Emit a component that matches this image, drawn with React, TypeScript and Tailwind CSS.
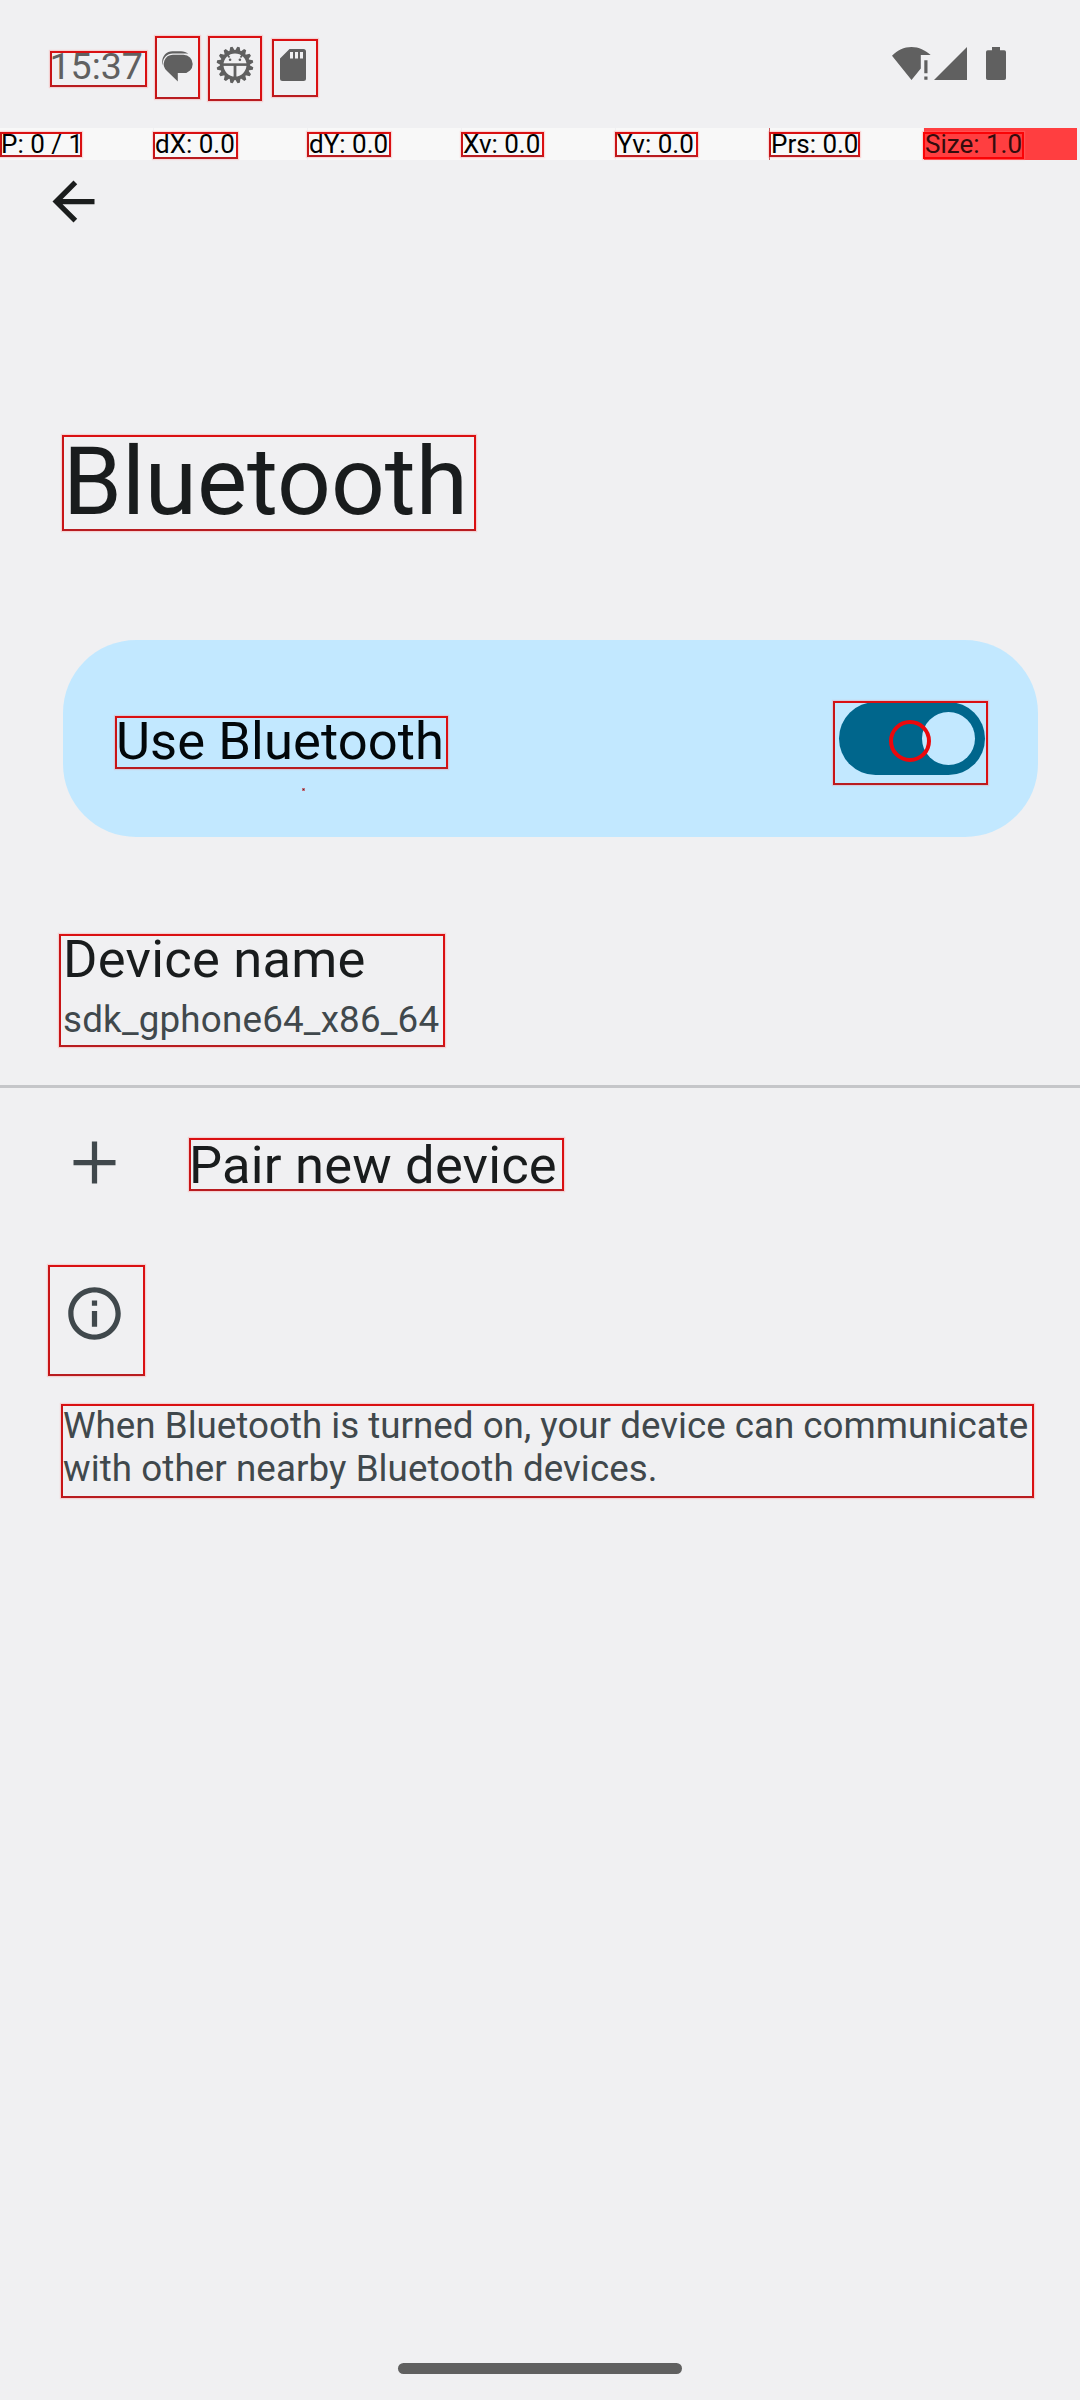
import type { ReactNode } from "react";

/** Thin red frame drawn around every detected element. */
function Marked({ className, children }: { className: string; children?: ReactNode }) {
  return (
    <div
      className={`box-border shrink-0 whitespace-nowrap border-2 border-t-[#da1012] border-r-[#da1012] border-b-[#b81c20] border-l-[#c81416] shadow-[0_0_1px_1px_rgba(255,130,130,0.28)] ${className}`}
    >
      {children}
    </div>
  );
}

const cells = [
  { text: "P: 0 / 1", box: "w-[82px] h-[25px] pl-0", cell: "bg-[#f8f8f8]", indent: "-ml-[1px]" },
  { text: "dX: 0.0", box: "w-[85px] h-[27px] -ml-px", cell: "bg-[#f8f8f8]", indent: "ml-0" },
  { text: "dY: 0.0", box: "w-[84px] h-[25px] -ml-px", cell: "bg-[#f8f8f8]", indent: "ml-0" },
  { text: "Xv: 0.0", box: "w-[83px] h-[25px] -ml-px", cell: "bg-[#f8f8f8]", indent: "ml-0" },
  { text: "Yv: 0.0", box: "w-[83px] h-[25px] -ml-px", cell: "bg-[#f8f8f8]", indent: "ml-0" },
  { text: "Prs: 0.0", box: "w-[91px] h-[25px] -ml-px", cell: "bg-[#f8f8f8] shadow-[-1px_0_0_#c85a5e]", indent: "ml-0" },
  { text: "Size: 1.0", box: "w-[101px] h-[27px] -ml-px border-[#fa0306]!", cell: "bg-[#ff3e40] text-[#330c0d]", indent: "ml-0" },
];

function ChatIcon() {
  return (
    <svg width="32" height="32" viewBox="0 0 32 32" className="mt-[13px] ml-[5px]" fill="#606060">
      <path d="M11 3.700h10.500a9.200 9.200 0 0 1 0 18.400h-5.700v8.400L5 19.900A9.200 9.200 0 0 1 11 3.700z" />
      <path d="M.6 14.200C-1.200 6.500 3.500 .2 10.500 .2h8.500c3 0 5.400 .9 7.300 2.600-1.300-.3-2.700-.4-4.300-.4H10.800C4.800 2.400 .8 7.500 .9 12z" />
    </svg>
  );
}

const teeth = Array.from({ length: 16 }, (_, i) => i * 22.5);

function GearIcon() {
  return (
    <svg width="38" height="38" viewBox="-19 -19 38 38" className="mt-[8px] ml-[6px]" fill="#606060">
      {teeth.map((a) => (
        <path key={a} d="M-3-13.500L-1.200-18.400h2.400L3-13.500z" transform={`rotate(${a + 11})`} />
      ))}
      <circle r="13.200" fill="none" stroke="#606060" strokeWidth="3.400" />
      <path d="M-13-1.700h26v2.600h-26z" />
      <path d="M-1.400-1h2.800v14h-2.800z" />
      <path d="M-8.500-11.500l3 4M8.500-11.500l-3 4" stroke="#606060" strokeWidth="1.800" />
      <circle cx="-4.900" cy="-5.200" r="1.300" />
      <circle cx="4.900" cy="-5.200" r="1.300" />
    </svg>
  );
}

function SdCardIcon() {
  return (
    <svg width="26" height="32" viewBox="0 0 26 32" className="mt-[8px] ml-[6px]">
      <path d="M9.500 0H23.500A2.500 2.500 0 0 1 26 2.500v27a2.500 2.500 0 0 1-2.500 2.500h-21A2.500 2.500 0 0 1 0 29.500V9.500z" fill="#606060" />
      <path d="M10 3h3v6.500h-3zM15 3h3v6.500h-3zM20 3h3v6.500h-3z" fill="#f0f0f2" />
    </svg>
  );
}

function StatusBar() {
  return (
    <div className="flex h-[128px] items-start pl-[50px]">
      <Marked className="mt-[51px] h-[36px] w-[97px] text-[37.5px] leading-[26px] text-[#606060]">
        <span className="-ml-[2.500px]">15:37</span>
      </Marked>
      <Marked className="mt-[36px] ml-[8px] h-[63px] w-[45px]">
        <ChatIcon />
      </Marked>
      <Marked className="mt-[36px] ml-[8px] h-[65px] w-[54px]">
        <GearIcon />
      </Marked>
      <Marked className="mt-[39px] ml-[10px] h-[58px] w-[46px]">
        <SdCardIcon />
      </Marked>
      <div className="mt-[47px] mr-[74px] ml-auto flex">
        <svg width="39" height="33" viewBox="0 0 39 33" fill="#606060">
          <path d="M19.500 33L0 8.700C5.500 3.300 12 0 19.500 0S33.200 3.300 38.700 8H28.800v13.400z" />
          <path d="M32.300 13.200h3.200v13h-3.200zM32.300 29.600h3.200v3.200h-3.200z" />
        </svg>
        <svg width="33" height="33" viewBox="0 0 33 33" className="ml-[3px]" fill="#606060">
          <path d="M33 0v33H0z" />
        </svg>
        <svg width="20" height="33" viewBox="0 0 20 33" className="ml-[19px]" fill="#606060">
          <path d="M6 0h8v3.300h4.200A1.800 1.800 0 0 1 20 5.100v26.100a1.800 1.800 0 0 1-1.800 1.800H1.800A1.800 1.800 0 0 1 0 31.200V5.100a1.800 1.800 0 0 1 1.800-1.800H6z" />
        </svg>
      </div>
    </div>
  );
}

function PointerBar() {
  return (
    <div className="flex h-[32px] gap-px text-[26px] leading-[20px] text-black">
      {cells.map((c) => (
        <div key={c.text} className={`w-[153px] pt-[4px] ${c.cell}`}>
          <Marked className={c.box}>
            <span className={c.indent}>{c.text}</span>
          </Marked>
        </div>
      ))}
    </div>
  );
}

export default function App() {
  return (
    <div className="flex h-[2400px] w-[1080px] flex-col overflow-hidden bg-[#f0f0f2] font-[Roboto,sans-serif] text-[#191c1d]">
      <StatusBar />
      <PointerBar />

      <div className="h-[275px] shrink-0 pt-[10px] pl-[42px]">
        <svg width="63" height="63" viewBox="0 0 24 24" fill="#1b1d1d">
          <path d="M20 11H7.830l5.590-5.590L12 4l-8 8 8 8 1.410-1.410L7.830 13H20v-2z" />
        </svg>
      </div>

      <Marked className="ml-[62px] h-[96px] w-[414px] text-[94.5px] leading-[90px]">
        <h1 className="-ml-px">Bluetooth</h1>
      </Marked>

      <div className="relative mt-[109px] ml-[63px] flex h-[197px] w-[975px] shrink-0 items-start rounded-[73px] bg-[#c2e8ff]">
        <Marked className="mt-[76px] ml-[52px] h-[53px] w-[333px] text-[52.5px] leading-[46px] tracking-[0.08px] text-[#02070a]">
          <span className="-ml-px">Use Bluetooth</span>
        </Marked>
        <span className="absolute top-[148px] left-[239px] size-[3px] border border-[#c0707c] bg-[#4a2f3c]" />
        <div className="relative mt-[61px] mr-[50px] ml-auto h-[84px] w-[155px]">
          <div className="mt-[1px] ml-[6px] flex h-[73px] w-[146px] items-center justify-end rounded-full bg-[#00668c] pr-[10px]">
            <span className="size-[53px] rounded-full bg-[#c2e8ff]" />
          </div>
          <Marked className="absolute inset-0" />
          <span className="absolute top-[19px] left-[56px] size-[42px] rounded-full border-[4.5px] border-[#ec080c]" />
        </div>
      </div>

      <Marked className="mt-[97px] ml-[59px] h-[113px] w-[386px] pl-[2px]">
        <div className="text-[52.5px] leading-[46px] tracking-[0.25px]">Device name</div>
        <div className="mt-[16px] text-[36.75px] leading-[43px] tracking-[0.2px] text-[#40484c]">sdk_gphone64_x86_64</div>
      </Marked>

      <div className="mt-[38px] h-[3px] shrink-0 bg-[#c5c6c9]" />

      <div className="mt-[43px] flex h-[70px] shrink-0 items-start pl-[63px]">
        <svg width="63" height="63" viewBox="0 0 24 24" fill="#40484c">
          <path d="M20 13h-7v7h-2v-7H4v-2h7V4h2v7h7v2z" />
        </svg>
        <Marked className="mt-[7px] ml-[63px] h-[53px] w-[375px] text-[52.5px] leading-[50px] tracking-[0.2px]">
          <span className="-ml-[2px]">Pair new device</span>
        </Marked>
      </div>

      <Marked className="mt-[64px] ml-[48px] h-[111px] w-[97px] pt-[15px] pl-[13px]">
        <svg width="63" height="63" viewBox="0 0 24 24" fill="#40484c">
          <path d="M11 7h2v2h-2zm0 4h2v6h-2zm1-9C6.480 2 2 6.480 2 12s4.480 10 10 10 10-4.480 10-10S17.520 2 12 2zm0 18c-4.410 0-8-3.590-8-8s3.590-8 8-8 8 3.590 8 8-3.590 8-8 8z" />
        </svg>
      </Marked>

      <Marked className="mt-[28px] ml-[61px] h-[94px] w-[973px] text-[36.75px] leading-[43px] text-[#40484c]">
        <p className="-mt-[2px]">
          When Bluetooth is turned on, your device can communicate
          <br />
          <span className="tracking-[0.07px]">with other nearby Bluetooth devices.</span>
        </p>
      </Marked>

      <div className="mt-auto mb-[26px] ml-[398px] h-[11px] w-[284px] shrink-0 rounded-full bg-[#606060]" />
    </div>
  );
}
